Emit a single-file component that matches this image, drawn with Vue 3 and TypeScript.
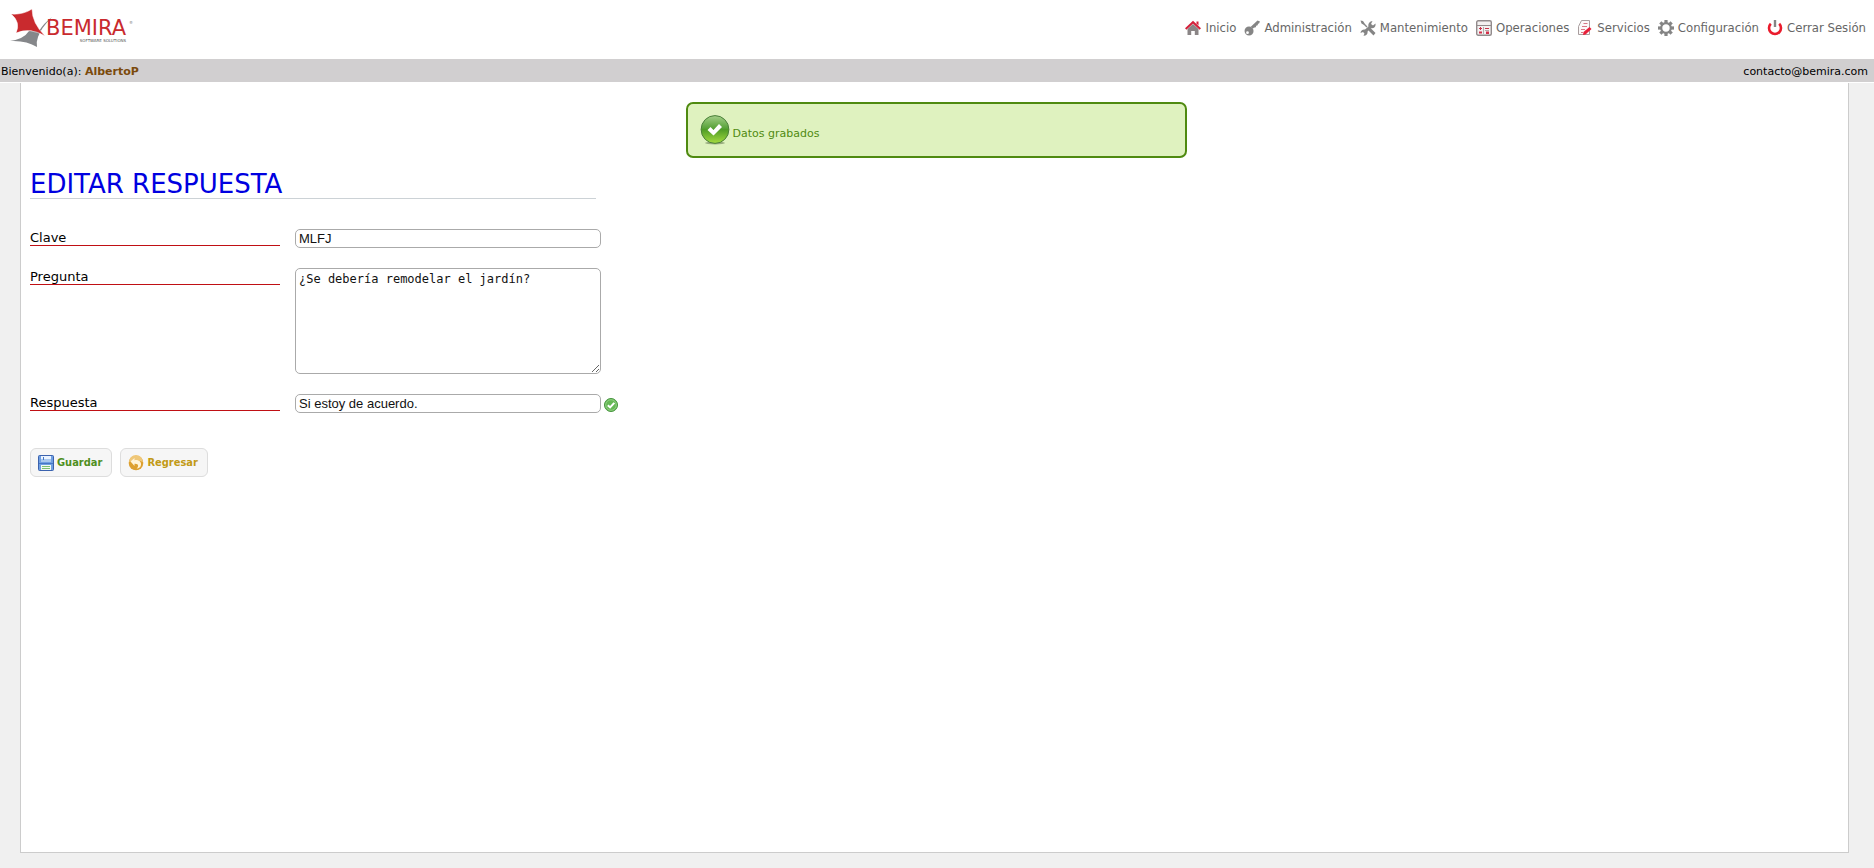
<script setup lang="ts">
import { ref } from 'vue'

interface MenuItem {
  icon: string
  label: string
}

const menu: MenuItem[] = [
  { icon: 'home', label: 'Inicio' },
  { icon: 'key', label: 'Administración' },
  { icon: 'tools', label: 'Mantenimiento' },
  { icon: 'calc', label: 'Operaciones' },
  { icon: 'note', label: 'Servicios' },
  { icon: 'gear', label: 'Configuración' },
  { icon: 'power', label: 'Cerrar Sesión' },
]

const teeth: number[] = [0, 45, 90, 135, 180, 225, 270, 315]

const clave = ref('MLFJ')
const pregunta = ref('¿Se debería remodelar el jardín?')
const respuesta = ref('Si estoy de acuerdo.')
const saved = ref(true)

function save(): void {
  saved.value = true
}
</script>

<template>
  <div class="page">
    <header class="header">
      <a class="logo" href="#" aria-label="Bemira Software Solutions">
        <svg class="logo-mark" viewBox="0 0 42 40" aria-hidden="true">
          <path fill="#85878a" d="M42 8Q31 19 28 28Q26 33 27 38Q16 31 0 32Q14 30 19 22L29 22Q34 14 42 8Z" />
          <path fill="#c92a2e" stroke="#fff" stroke-width=".5" d="M1 5Q13 6 22 0Q22 14 35 27Q20 18 6 24Q11 13 1 5Z" />
        </svg>
        <span class="logo-text">
          <span class="logo-name">BEMIRA</span>
          <span class="logo-sub">SOFTWARE SOLUTIONS</span>
        </span>
        <span class="logo-reg">®</span>
      </a>

      <nav class="menu" aria-label="Principal">
        <a v-for="item in menu" :key="item.icon" class="menu-item" href="#">
          <svg class="menu-icon" viewBox="0 0 16 16" aria-hidden="true">
            <g v-if="item.icon === 'home'">
              <path fill="#8a8586" d="M2.500 9 8 4l5.500 5v6H9.800v-4H6.200v4H2.500z" />
              <path fill="none" stroke="#d3203a" stroke-width="2" d="M.7 9 8 2.200 15.300 9" />
              <path fill="#d3203a" d="M11.500 1.500h2v4l-2-2z" />
            </g>
            <g v-else-if="item.icon === 'key'" fill="#858585">
              <path d="M13.500.5 16 1.500l-1 2-1 .3-.3 1.500-1.500.5-.4 1.500-2 .5-1 1-2-2z" />
              <path fill-rule="evenodd" d="M5 6.500a4.500 4.500 0 1 0 .1 9 4.500 4.500 0 0 0-.1-9zm-1.500 4.800a1.400 1.400 0 1 1 0 2.800 1.400 1.400 0 0 1 0-2.800z" />
            </g>
            <g v-else-if="item.icon === 'tools'" fill="#858585">
              <path d="M.5.5 3 1l2 3 2.500 2.500-1 1L4 5 1.500 3.500z" />
              <path d="m9 8.500 1.500-.5 5 5-2 2.500-5-5z" />
              <path d="M15.500 3.500 13 5.500l-2-1.500 1.500-3a4.300 4.300 0 0 0-4 5.500L5 9.500a3.700 3.700 0 0 0-4.500 3.500L3 12l1.500 1.500-1 2.300c2.500.3 4.500-1.800 4-4.300L11 8.200c3 .6 5-1.700 4.500-4.700z" />
            </g>
            <g v-else-if="item.icon === 'calc'">
              <rect x=".7" y=".7" width="14.600" height="14.600" rx="1.500" fill="#f4f1f1" stroke="#928b8c" stroke-width="1.400" />
              <path stroke="#928b8c" d="M1 5.500h14" />
              <path stroke="#c9334a" d="M3 8.500h3M4.500 7v3M9 8.500h4" />
              <path fill="#d3304a" d="M3 11.500h3v2H3zM10 11.500h3v2.500h-3z" />
              <path fill="#b3acac" d="M7 7h1v7H7zM9 10h4v1H9z" />
            </g>
            <g v-else-if="item.icon === 'note'">
              <path fill="#fbf8f8" stroke="#a89d9e" d="M4.500.5h8v14h-11v-8z" />
              <path fill="none" stroke="#d77886" d="M6.500 3.500h4M5 6.500h5M4 9.500h4M4 12.500h2" />
              <path fill="#e8203a" d="m6.500 12 6-5 2 2-6 5.500L6 15z" />
            </g>
            <g v-else-if="item.icon === 'gear'">
              <rect v-for="angle in teeth" :key="angle" x="6.400" y="0" width="3.200" height="4" fill="#858585" :transform="`rotate(${angle} 8 8)`" />
              <circle cx="8" cy="8" r="4.800" fill="none" stroke="#858585" stroke-width="2.200" />
            </g>
            <g v-else fill="none">
              <path stroke="#ea1c2d" stroke-width="2.600" d="M3.800 3.700a6 6 0 1 0 8.400 0" />
              <path stroke="#858585" stroke-width="2.400" d="M8 0v7" />
            </g>
          </svg>
          <span>{{ item.label }}</span>
        </a>
      </nav>
    </header>

    <div class="userbar">
      <span>Bienvenido(a): <strong class="user">AlbertoP</strong></span>
      <span>contacto@bemira.com</span>
    </div>

    <main class="panel">
      <div v-if="saved" class="alert" role="status">
        <svg class="alert-icon" viewBox="0 0 30 30" aria-hidden="true">
          <defs>
            <linearGradient id="ball" x1="0" y1="0" x2="0" y2="1">
              <stop offset="0" stop-color="#a3cf88" />
              <stop offset=".45" stop-color="#59a339" />
              <stop offset=".5" stop-color="#4f9c26" />
              <stop offset="1" stop-color="#a5dc3f" />
            </linearGradient>
          </defs>
          <ellipse cx="15" cy="28" rx="10" ry="1.500" fill="#9aad80" />
          <circle cx="15" cy="14.500" r="13.900" fill="url(#ball)" stroke="#4b803a" />
          <path fill="#fff" d="m7.500 15 3-3 3 3 5.500-6 3 3-8.500 8.500z" />
        </svg>
        <span class="alert-text">Datos grabados</span>
      </div>

      <h1 class="title">EDITAR RESPUESTA</h1>

      <form @submit.prevent="save">
        <div class="row">
          <label class="label" for="clave">Clave</label>
          <input id="clave" v-model="clave" class="field" type="text" />
        </div>
        <div class="row">
          <label class="label" for="pregunta">Pregunta</label>
          <textarea id="pregunta" v-model="pregunta" class="field area" spellcheck="false"></textarea>
        </div>
        <div class="row">
          <label class="label" for="respuesta">Respuesta</label>
          <input id="respuesta" v-model="respuesta" class="field" type="text" />
          <svg class="valid" viewBox="0 0 14 14" aria-hidden="true">
            <circle cx="7" cy="7" r="6.500" fill="#66b856" stroke="#45933d" />
            <circle cx="7" cy="7" r="5.300" fill="none" stroke="#9bd58d" stroke-width=".8" />
            <path fill="none" stroke="#fff" stroke-width="2" d="m3.800 7.200 2.300 2.200 4.200-4.600" />
          </svg>
        </div>

        <div class="actions">
          <button class="button save" type="submit">
            <svg class="button-icon" viewBox="0 0 16 16" aria-hidden="true">
              <rect x=".5" y=".5" width="15" height="15" rx="1" fill="#6f9fe2" stroke="#3b62ae" />
              <path fill="#eaf3ff" d="M3 1h10v6H3z" />
              <path fill="#a9c8ee" d="M3 4h10v3H3z" />
              <path fill="#4776c4" d="M5 2h1v3H5zM1 8h14v1H1z" />
              <path fill="#f2faf0" d="M3 10h10v5H3z" />
              <path fill="#7dbf73" d="M4 11h8v1H4zM4 13h8v1H4z" />
            </svg>
            Guardar
          </button>
          <button class="button back" type="button">
            <svg class="button-icon" viewBox="0 0 16 16" aria-hidden="true">
              <circle cx="8" cy="8" r="7.300" fill="#dda02f" />
              <path fill="#efc778" d="M1 7a7 7 0 0 1 14 0Q8 3.500 1 7z" />
              <path fill="#fff4d8" d="m2.500 6.500 4-3.500v2.200c4.500-.7 7 1.800 6.500 4.800-.3 2-2 3.500-4.500 3.800 2-1.500 3-5.300-2-5V11z" />
            </svg>
            Regresar
          </button>
        </div>
      </form>
    </main>
  </div>
</template>

<style>
body {
  margin: 0;
  background: #f0f0f0;
}
</style>

<style scoped>
.page {
  display: flex;
  flex-direction: column;
  min-height: 100vh;
  box-sizing: border-box;
  padding-bottom: 15px;
  font-family: Verdana, "DejaVu Sans", sans-serif;
  font-size: 11px;
  color: #000;
}

.header {
  display: flex;
  justify-content: space-between;
  align-items: flex-start;
  height: 59px;
  background: #fff;
}

.logo {
  display: flex;
  margin: 9px 0 0 10px;
  text-decoration: none;
}

.logo-mark {
  width: 42px;
  height: 40px;
}

.logo-text {
  display: flex;
  flex-direction: column;
  margin: 9px 0 0 -6px;
}

.logo-name {
  font-size: 21px;
  line-height: 20px;
  color: #c92a2e;
}

.logo-sub {
  align-self: flex-end;
  font-size: 4px;
  line-height: 5px;
  color: #555;
}

.logo-reg {
  margin: 12px 0 0 3px;
  font-size: 4px;
  line-height: 4px;
  color: #777;
}

.menu {
  display: flex;
  gap: 8px;
  padding: 18px 8px 0 0;
}

.menu-item {
  display: flex;
  align-items: center;
  gap: 4px;
  font-family: Tahoma, "DejaVu Sans Condensed", "DejaVu Sans", sans-serif;
  font-size: 13px;
  font-stretch: condensed;
  line-height: 20px;
  color: #666;
  text-decoration: none;
}

.menu-icon {
  width: 16px;
  height: 16px;
}

.userbar {
  display: flex;
  justify-content: space-between;
  padding: 2px 6px 0 1px;
  line-height: 21px;
  background: #d1cfd0;
  border-bottom: 1px solid #fff;
}

.user {
  color: #7b4a0c;
}

.panel {
  flex: 1;
  margin: 0 25px 0 20px;
  padding: 19px 6px 0 9px;
  border: 1px solid #ccc;
  border-top: 0;
  background: #fff;
}

.alert {
  display: flex;
  align-items: center;
  gap: 3px;
  width: 501px;
  height: 56px;
  box-sizing: border-box;
  margin: 0 auto;
  padding: 0 12px;
  border: 2px solid #4f8a10;
  border-radius: 7px;
  background: #dff2bf;
  color: #4f8a10;
}

.alert-icon {
  width: 30px;
  height: 30px;
}

.alert-text {
  padding-top: 6px;
}

.title {
  width: 566px;
  margin: 12px 0 30px;
  border-bottom: 1px solid #ccd2d6;
  font-size: 26px;
  font-weight: 400;
  line-height: 28px;
  color: #0000e0;
}

.row {
  display: flex;
  align-items: flex-start;
  margin-bottom: 20px;
}

.label {
  width: 250px;
  margin-right: 15px;
  padding-top: 2px;
  border-bottom: 1px solid #c00f14;
  font-size: 13px;
  line-height: 14px;
}

.field {
  width: 306px;
  height: 19px;
  box-sizing: border-box;
  margin: 0;
  padding: 1px 3px;
  border: 1px solid #aaa;
  border-radius: 5px;
  background: #fff;
  font-family: Arial, "Liberation Sans", sans-serif;
  font-size: 13px;
  line-height: 15px;
  color: #111;
}

.area {
  height: 106px;
  padding: 3px;
  font-family: Consolas, "DejaVu Sans Mono", monospace;
  font-size: 12px;
  resize: both;
}

.valid {
  width: 14px;
  height: 14px;
  margin: 4px 0 0 3px;
}

.actions {
  display: flex;
  gap: 8px;
  margin-top: 35px;
}

.button {
  display: flex;
  align-items: center;
  gap: 3px;
  height: 29px;
  padding: 0 9px 0 7px;
  border: 1px solid #ddd;
  border-radius: 6px;
  background: #f6f6f6;
  font-family: Tahoma, "DejaVu Sans Condensed", "DejaVu Sans", sans-serif;
  font-size: 11px;
  font-stretch: condensed;
  font-weight: 700;
}

.button-icon {
  width: 16px;
  height: 16px;
}

.save {
  color: #4f8f1f;
}

.back {
  color: #c29a17;
}
</style>
